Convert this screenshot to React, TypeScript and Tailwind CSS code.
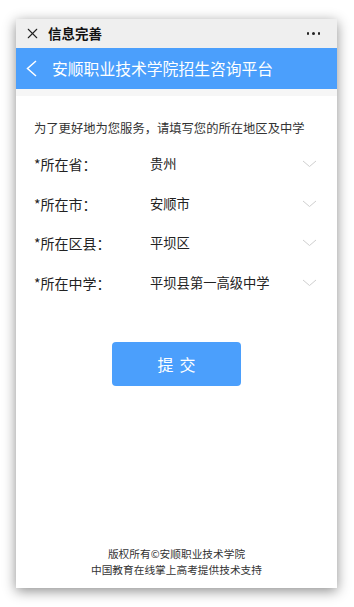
import { X } from "lucide-react";

const rows = [
  { label: "*所在省：", value: "贵州" },
  { label: "*所在市：", value: "安顺市" },
  { label: "*所在区县：", value: "平坝区" },
  { label: "*所在中学：", value: "平坝县第一高级中学" },
];

function Caret() {
  return (
    <svg width="15" height="8" viewBox="0 0 15 8" className="ml-auto mr-[2px]">
      <polyline points="1,1 7.5,6.5 14,1" fill="none" stroke="#cfcfcf" strokeWidth="1" />
    </svg>
  );
}

export default function App() {
  return (
    <div
      className="w-[354px] h-[607px] bg-white pt-[19px] pl-[16px]"
      style={{ fontFamily: '"Noto Sans CJK SC", "Noto Sans", sans-serif' }}
    >
      <div className="w-[321px] h-[569px] bg-white flex flex-col shadow-[0_3px_12px_rgba(0,0,0,0.45)]">
        {/* top bar */}
        <div className="h-[29px] bg-[#efefef] flex items-center pl-[8px] pr-[17px]">
          <X className="w-[17px] h-[17px] text-[#222]" strokeWidth={1.5} />
          <span className="ml-[7px] text-[13.5px] font-bold text-[#111] leading-none">信息完善</span>
          <span className="ml-auto flex gap-[3px]">
            <i className="w-[2.5px] h-[2.5px] rounded-full bg-[#222]" />
            <i className="w-[2.5px] h-[2.5px] rounded-full bg-[#222]" />
            <i className="w-[2.5px] h-[2.5px] rounded-full bg-[#222]" />
          </span>
        </div>

        {/* blue header */}
        <div className="h-[41px] bg-[#4b9ffc] flex items-center pl-[10px]">
          <svg width="11" height="17" viewBox="0 0 11 17">
            <polyline points="10,1 1.5,8.5 10,16" fill="none" stroke="#fff" strokeWidth="1.5" />
          </svg>
          <span className="ml-[15px] text-[15.8px] text-white leading-none">安顺职业技术学院招生咨询平台</span>
        </div>
        <div className="h-[7px] bg-[#f6f6f6]" />

        {/* form */}
        <div className="px-[18px] pt-[26px] flex flex-col">
          <p className="text-[12.3px] text-[#333] leading-none whitespace-nowrap">
            为了更好地为您服务，请填写您的所在地区及中学
          </p>
          <div className="mt-[10px] flex flex-col">
            {rows.map((r) => (
              <div key={r.label} className="h-[39.5px] flex items-center">
                <span className="w-[116px] text-[14px] text-[#222] leading-none whitespace-nowrap">{r.label}</span>
                <span className="text-[13.3px] text-[#222] leading-none whitespace-nowrap">{r.value}</span>
                <Caret />
              </div>
            ))}
          </div>

          <button className="self-center mt-[40px] w-[129px] h-[44px] rounded-[4px] bg-[#4b9ffc] text-white text-[16px] tracking-[6px] pl-[6px]">
            提交
          </button>
        </div>

        {/* footer */}
        <div className="mt-auto pb-[10px] flex flex-col items-center text-[10.7px] text-[#333] leading-[16px]">
          <span>版权所有©安顺职业技术学院</span>
          <span>中国教育在线掌上高考提供技术支持</span>
        </div>
      </div>
    </div>
  );
}
